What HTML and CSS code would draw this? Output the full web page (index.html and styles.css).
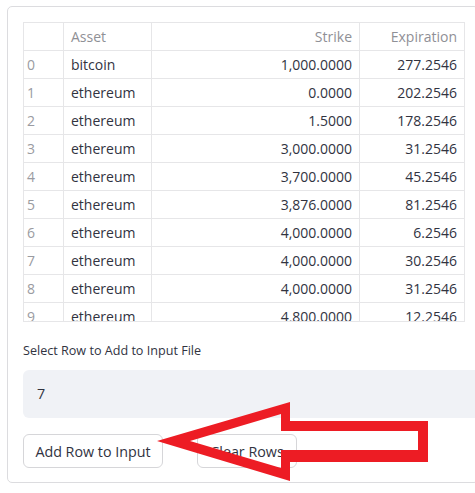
FILE: index.html
```html
<!DOCTYPE html>
<html>
<head>
<meta charset="utf-8">
<link rel="stylesheet" href="styles.css">
</head>
<body>
<div class="card">
  <div class="grid">
    <div class="row head"><div class="c idx"></div><div class="c">Asset</div><div class="c num">Strike</div><div class="c num last">Expiration</div></div>
    <div class="row"><div class="c idx">0</div><div class="c">bitcoin</div><div class="c num">1,000.0000</div><div class="c num last">277.2546</div></div>
    <div class="row"><div class="c idx">1</div><div class="c">ethereum</div><div class="c num">0.0000</div><div class="c num last">202.2546</div></div>
    <div class="row"><div class="c idx">2</div><div class="c">ethereum</div><div class="c num">1.5000</div><div class="c num last">178.2546</div></div>
    <div class="row"><div class="c idx">3</div><div class="c">ethereum</div><div class="c num">3,000.0000</div><div class="c num last">31.2546</div></div>
    <div class="row"><div class="c idx">4</div><div class="c">ethereum</div><div class="c num">3,700.0000</div><div class="c num last">45.2546</div></div>
    <div class="row"><div class="c idx">5</div><div class="c">ethereum</div><div class="c num">3,876.0000</div><div class="c num last">81.2546</div></div>
    <div class="row"><div class="c idx">6</div><div class="c">ethereum</div><div class="c num">4,000.0000</div><div class="c num last">6.2546</div></div>
    <div class="row"><div class="c idx">7</div><div class="c">ethereum</div><div class="c num">4,000.0000</div><div class="c num last">30.2546</div></div>
    <div class="row"><div class="c idx">8</div><div class="c">ethereum</div><div class="c num">4,000.0000</div><div class="c num last">31.2546</div></div>
    <div class="row"><div class="c idx">9</div><div class="c">ethereum</div><div class="c num">4,800.0000</div><div class="c num last">12.2546</div></div>
  </div>
  <div class="label">Select Row to Add to Input File</div>
  <div class="select">7</div>
  <div class="buttons">
    <button class="btn btn-add">Add Row to Input</button>
    <button class="btn btn-clear">Clear Rows</button>
  </div>
</div>
<svg class="arrow" width="475" height="493" viewBox="0 0 475 493">
  <path fill="#ed1c24" fill-rule="evenodd" d="M157 441 L290 402 L290 421 L428 421 L428 462 L290 462 L290 481 Z M190 441 L281 414 L281 431 L418 431 L418 450 L281 450 L281 468 Z"/>
</svg>
</body>
</html>
```
FILE: styles.css
```css
html, body {
  margin: 0;
  padding: 0;
  background: #ffffff;
  overflow: hidden;
  width: 475px;
  height: 493px;
}
body {
  font-family: "Open Sans", "Noto Sans", sans-serif;
  color: #31333f;
}
.card {
  box-sizing: border-box;
  margin: 6px 0 0 7px;
  width: 472px;
  border: 1px solid #dcdcdf;
  border-radius: 5px;
  padding: 15px 0 14px 15px;
}
.grid {
  box-sizing: border-box;
  width: 442px;
  height: 300px;
  overflow: hidden;
  border: 1px solid #e6e6e8;
}
.row {
  display: grid;
  grid-template-columns: 40px 88px 208px 104px;
  height: 28px;
  box-sizing: border-box;
  border-bottom: 1px solid #e6e6e8;
}
.c {
  box-sizing: border-box;
  border-right: 1px solid #e6e6e8;
  padding: 0 7px;
  font-size: 14px;
  line-height: 28px;
  white-space: nowrap;
  overflow: hidden;
  color: #31333f;
}
.c.last { border-right: none; }
.c.num { text-align: right; }
.c.idx { color: #9a9ba1; padding-left: 3px; }
.head .c { color: #8f9096; }
.label {
  margin-top: 19px;
  font-size: 12.6px;
  line-height: 20px;
  height: 20px;
  color: #31333f;
}
.select {
  margin-top: 9px;
  height: 48px;
  background: #f0f2f6;
  border-radius: 6px 0 0 6px;
  font-size: 14.3px;
  line-height: 48px;
  padding-left: 14px;
  color: #31333f;
}
.buttons {
  display: flex;
  gap: 34px;
  margin-top: 16px;
}
.btn {
  box-sizing: border-box;
  height: 34px;
  padding: 0;
  white-space: nowrap;
  text-align: center;
  background: #ffffff;
  border: 1px solid #d6d6d9;
  border-radius: 6px;
  font-family: "Open Sans", "Noto Sans", sans-serif;
  font-size: 14.3px;
  color: #31333f;
}
.btn-add { width: 140px; }
.btn-clear { width: 100px; }
.arrow {
  position: absolute;
  left: 0;
  top: 0;
  pointer-events: none;
}
```
